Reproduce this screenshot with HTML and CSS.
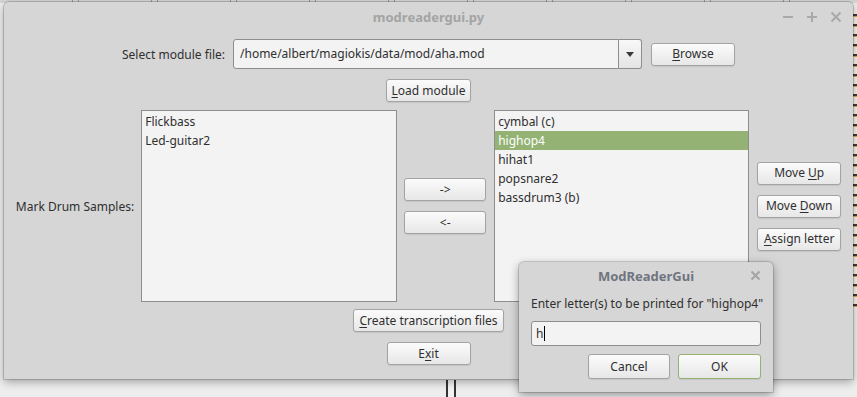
FILE: index.html
```html
<!DOCTYPE html>
<html lang="en">
<head>
    <meta charset="UTF-8">
    <title>modreadergui.py</title>
    <link rel="stylesheet" href="styles.css">
</head>
<body>

<div class="desktop">
    <div class="bg-tabs"></div>
    <div class="bg-editor"></div>
    <div class="bg-scroll"></div>

    <div class="window main-window">
        <div class="titlebar">
            <span></span>
            <span class="title">modreadergui.py</span>
            <div class="wm-controls">
                <svg width="12" height="12" viewBox="0 0 12 12"><path d="M1 6H11" stroke="#a9a9a9" stroke-width="2"/></svg>
                <svg width="12" height="12" viewBox="0 0 12 12"><path d="M1 6H11M6 1V11" stroke="#a9a9a9" stroke-width="2"/></svg>
                <svg width="12" height="12" viewBox="0 0 12 12"><path d="M1.5 1.5L10.5 10.5M10.5 1.5L1.5 10.5" stroke="#a9a9a9" stroke-width="2"/></svg>
            </div>
        </div>

        <div class="content">
            <div class="row file-row">
                <span class="label">Select module file:</span>
                <div class="combo">
                    <span class="combo-entry">/home/albert/magiokis/data/mod/aha.mod</span>
                    <span class="combo-arrow"></span>
                </div>
                <button class="btn browse-btn"><u>B</u>rowse</button>
            </div>

            <div class="row load-row">
                <button class="btn"><u>L</u>oad module</button>
            </div>

            <div class="row samples-row">
                <span class="label">Mark Drum Samples:</span>
                <div class="listbox">
                    <div class="list-item">Flickbass</div>
                    <div class="list-item">Led-guitar2</div>
                </div>
                <div class="btn-column">
                    <button class="btn btn-narrow">-&gt;</button>
                    <button class="btn btn-narrow">&lt;-</button>
                </div>
                <div class="listbox listbox-right">
                    <div class="list-item">cymbal (c)</div>
                    <div class="list-item selected">highop4</div>
                    <div class="list-item">hihat1</div>
                    <div class="list-item">popsnare2</div>
                    <div class="list-item">bassdrum3 (b)</div>
                </div>
                <div class="btn-column">
                    <button class="btn">Move <u>U</u>p</button>
                    <button class="btn">Move <u>D</u>own</button>
                    <button class="btn"><u>A</u>ssign letter</button>
                </div>
            </div>

            <div class="row create-row">
                <button class="btn"><u>C</u>reate transcription files</button>
            </div>

            <div class="row exit-row">
                <button class="btn">E<u>x</u>it</button>
            </div>
        </div>
    </div>

    <div class="window dialog">
        <div class="dialog-titlebar">
            <span></span>
            <span class="dialog-title">ModReaderGui</span>
            <svg class="dialog-close" width="11" height="11" viewBox="0 0 11 11"><path d="M1.5 1.5L9.5 9.5M9.5 1.5L1.5 9.5" stroke="#a3a3a3" stroke-width="2"/></svg>
        </div>
        <div class="dialog-body">
            <div class="prompt">Enter letter(s) to be printed for "highop4"</div>
            <div class="entry">h<span class="caret"></span></div>
            <div class="dialog-buttons">
                <button class="btn dialog-btn">Cancel</button>
                <button class="btn dialog-btn default-btn">OK</button>
            </div>
        </div>
    </div>
</div>

</body>
</html>
```

FILE: styles.css
```css
body {
    margin: 0;
    font-family: 'Noto Sans', 'DejaVu Sans', sans-serif;
    font-size: 12px;
    color: #2f2f2f;
    background-color: #ededed;
    width: 857px;
    height: 397px;
    overflow: hidden;
}

.desktop {
    position: relative;
    width: 857px;
    height: 397px;
    padding: 2px 0 0 4px;
    box-sizing: border-box;
}

/* bits of the windows behind */
.bg-tabs {
    position: absolute;
    left: 0;
    top: 0;
    width: 857px;
    height: 3px;
    background: repeating-linear-gradient(90deg, #d4d4d4 0 72px, #9a9a9a 72px 73px, #d4d4d4 73px 78px, #9a9a9a 78px 79px);
}

.bg-editor {
    position: absolute;
    right: 0;
    top: 10px;
    width: 4px;
    height: 300px;
    background: repeating-linear-gradient(180deg, #f4f1e4 0 4px, #3b3b3b 4px 6px, #d9a54a 6px 7px, #f4f1e4 7px 10px);
}

.bg-scroll {
    position: absolute;
    left: 446px;
    top: 380px;
    width: 6px;
    height: 17px;
    border-left: 2px solid #333;
    border-right: 2px solid #333;
    background-color: #f2f2f2;
}

.window {
    background-color: #d6d6d6;
    border-radius: 5px 5px 0 0;
    box-shadow: 0 0 0 1px rgba(0, 0, 0, 0.16), 0 3px 9px rgba(0, 0, 0, 0.32);
}

.main-window {
    position: relative;
    width: 849px;
    height: 377px;
}

.titlebar {
    height: 30px;
    display: grid;
    grid-template-columns: 1fr auto 1fr;
    align-items: center;
}

.title {
    font-weight: bold;
    font-size: 13px;
    color: #a4a4a4;
}

.wm-controls {
    justify-self: end;
    display: flex;
    gap: 12px;
    padding-right: 11px;
}

.content {
    padding-top: 7px;
    display: flex;
    flex-direction: column;
}

.row {
    display: flex;
    justify-content: center;
    align-items: center;
}

.file-row {
    height: 30px;
    gap: 8px;
}

.combo {
    width: 409px;
    height: 30px;
    display: flex;
}

.combo-entry {
    flex: 1;
    box-sizing: border-box;
    background-color: #f3f3f3;
    border: 1px solid #8d8d8d;
    border-radius: 3px 0 0 3px;
    padding-left: 6px;
    line-height: 28px;
}

.combo-arrow {
    width: 23px;
    box-sizing: border-box;
    border: 1px solid #8d8d8d;
    border-left: none;
    border-radius: 0 3px 3px 0;
    background: linear-gradient(#f8f8f8, #e4e4e4);
    position: relative;
}

.combo-arrow::after {
    content: '';
    position: absolute;
    left: 7px;
    top: 12px;
    border-left: 4px solid transparent;
    border-right: 4px solid transparent;
    border-top: 5px solid #3a3a3a;
}

.btn {
    font-family: inherit;
    font-size: 12px;
    color: #2f2f2f;
    height: 23px;
    min-width: 84px;
    padding: 0 5px;
    box-sizing: border-box;
    border: 1px solid #a3a3a3;
    border-radius: 3px;
    background: linear-gradient(#fbfbfb, #e7e7e7);
    box-shadow: 0 1px 1px rgba(0, 0, 0, 0.08);
    line-height: 20px;
}

.btn u {
    text-underline-offset: 2px;
}

.browse-btn {
    margin-left: 1px;
}

.load-row {
    margin-top: 10px;
}

.samples-row {
    margin-top: 8px;
    height: 192px;
}

.samples-row .label {
    margin-right: 7px;
}

.listbox {
    width: 256px;
    height: 192px;
    box-sizing: border-box;
    background-color: #f3f3f3;
    border: 1px solid #8e8e8e;
    padding-top: 1px;
}

.listbox-right {
    width: 255px;
}

.list-item {
    height: 19px;
    line-height: 19px;
    padding-left: 3px;
}

.list-item.selected {
    background-color: #93b274;
    color: #ffffff;
}

.btn-column {
    display: flex;
    flex-direction: column;
    gap: 10px;
    margin: 0 8px 0 7px;
}

.btn-column:last-child {
    margin: 0 0 0 8px;
}

.btn-narrow {
    min-width: 82px;
}

.create-row {
    margin-top: 7px;
}

.exit-row {
    margin-top: 10px;
}

/* dialog window */
.dialog {
    position: absolute;
    left: 519px;
    top: 262px;
    width: 254px;
    height: 130px;
    box-shadow: 0 0 0 1px rgba(0, 0, 0, 0.14), 0 3px 10px rgba(0, 0, 0, 0.38);
}

.dialog-titlebar {
    height: 27px;
    display: grid;
    grid-template-columns: 1fr auto 1fr;
    align-items: center;
}

.dialog-title {
    font-weight: bold;
    font-size: 13px;
    color: #6f7580;
}

.dialog-close {
    justify-self: end;
    margin-right: 12px;
}

.dialog-body {
    padding: 6px 12px 0 12px;
}

.prompt {
    line-height: 17px;
    white-space: nowrap;
}

.entry {
    margin-top: 9px;
    height: 25px;
    box-sizing: border-box;
    background-color: #f3f3f3;
    border: 1px solid #8e8e8e;
    border-radius: 3px;
    padding-left: 4px;
    line-height: 23px;
    display: flex;
    align-items: center;
}

.caret {
    display: inline-block;
    width: 1px;
    height: 15px;
    background-color: #000;
    margin-left: 1px;
}

.dialog-buttons {
    margin-top: 8px;
    display: flex;
    justify-content: flex-end;
    gap: 8px;
}

.dialog-btn {
    height: 25px;
    min-width: 82px;
}

.default-btn {
    min-width: 83px;
    border-color: #93b274;
}
```
